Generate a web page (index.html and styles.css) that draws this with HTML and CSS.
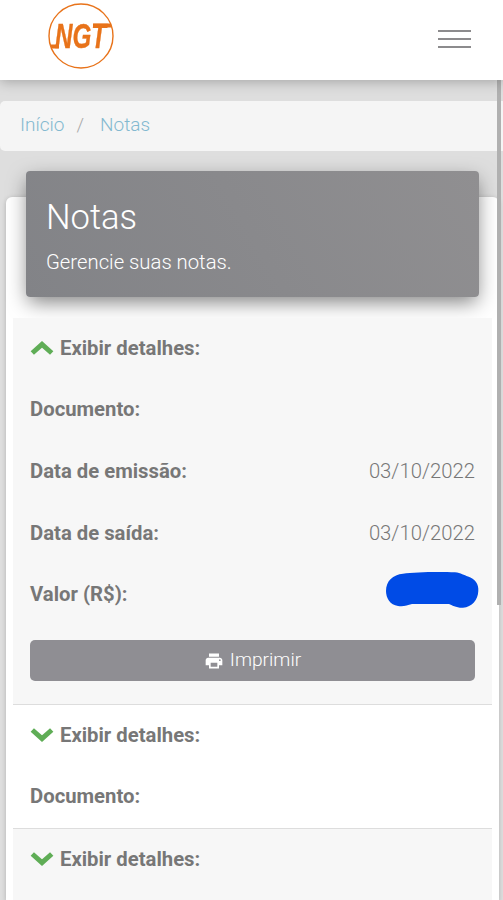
FILE: index.html
```html
<!DOCTYPE html>
<html lang="pt-BR">
<head>
    <meta charset="UTF-8">
    <meta name="viewport" content="width=device-width, initial-scale=1.0">
    <title>Notas</title>
    <link rel="stylesheet" href="styles.css">
</head>
<body>
    <nav class="navbar">
        <svg class="logo" viewBox="0 0 66 66" role="img" aria-label="NGT">
            <circle cx="33" cy="33" r="32"/>
            <path d="M3 43.5H11M45 22.5H63"/>
            <text x="7" y="45.3" textLength="51" lengthAdjust="spacingAndGlyphs">NGT</text>
        </svg>
        <button class="menu-toggle" aria-label="Menu">
            <span></span>
            <span></span>
            <span></span>
        </button>
    </nav>
    <ol class="breadcrumb">
        <li><a href="#">Início</a></li>
        <li><a href="#">Notas</a></li>
    </ol>
    <main class="card">
        <header class="card-header">
            <h4>Notas</h4>
            <p>Gerencie suas notas.</p>
        </header>
        <div class="notes">
            <section class="note">
                <div class="row toggle">
                    <svg class="chevron" viewBox="0 0 24 16"><path d="M2.3 13L12 4.4L21.7 13"/></svg>
                    <b>Exibir detalhes:</b>
                </div>
                <div class="row"><b>Documento:</b></div>
                <div class="row"><b>Data de emissão:</b><span>03/10/2022</span></div>
                <div class="row"><b>Data de saída:</b><span>03/10/2022</span></div>
                <div class="row">
                    <b>Valor (R$):</b>
                    <svg class="mask" viewBox="0 0 94 38"><path d="M18 2.8C30 .6 57 .8 70 1.2C76 2 79 4 83 5.4C90 7.5 94 13 93.3 20C93 29 87 36 78 36.8C71 37 67 34 64 33H27C22 34 19 36 13 35C5 34 1 27 1 20C1 10 8 3.7 18 2.8Z"/></svg>
                </div>
                <div class="actions">
                    <button class="btn">
                        <svg viewBox="0 0 24 24"><path d="M19 8H5c-1.66 0-3 1.34-3 3v6h4v4h12v-4h4v-6c0-1.66-1.34-3-3-3zm-3 11H8v-5h8v5zm3-7a1 1 0 1 1 0-2 1 1 0 0 1 0 2zM18 3H6v4h12V3z"/></svg>
                        Imprimir
                    </button>
                </div>
            </section>
            <section class="note">
                <div class="row toggle">
                    <svg class="chevron" viewBox="0 0 24 16"><path d="M2.3 3L12 11.6L21.7 3"/></svg>
                    <b>Exibir detalhes:</b>
                </div>
                <div class="row"><b>Documento:</b></div>
            </section>
            <section class="note">
                <div class="row toggle">
                    <svg class="chevron" viewBox="0 0 24 16"><path d="M2.3 3L12 11.6L21.7 3"/></svg>
                    <b>Exibir detalhes:</b>
                </div>
            </section>
        </div>
    </main>
    <div class="scroll-thumb"></div>
</body>
</html>
```

FILE: styles.css
```css
* {
    box-sizing: border-box;
}
body {
    margin: 0;
    height: 100vh;
    display: flex;
    flex-direction: column;
    overflow: hidden;
    background-color: #dedede;
    color: #777;
    font-family: Roboto, "Liberation Sans", sans-serif;
    font-size: 20.3px;
    font-weight: 300;
}
.navbar {
    position: relative;
    z-index: 3;
    display: flex;
    flex-shrink: 0;
    justify-content: space-between;
    height: 80px;
    padding: 3px 32px 0 48px;
    background-color: #fff;
    box-shadow: 0 2px 12px rgba(0, 0, 0, 0.26);
}
.logo {
    width: 66px;
    height: 66px;
    overflow: visible;
    fill: none;
    stroke: #e8731a;
}
.logo circle {
    stroke-width: 1.4;
}
.logo path {
    stroke-width: 4;
}
.logo text {
    fill: #e8731a;
    stroke-width: 0.4;
    font: italic 700 35px "Liberation Sans", sans-serif;
}
.menu-toggle {
    display: flex;
    flex-direction: column;
    gap: 6px;
    width: 33px;
    margin-top: 27px;
    padding: 0;
    border: none;
    background: none;
}
.menu-toggle span {
    height: 2px;
    width: 33px;
    background-color: #8c8b8d;
}
.breadcrumb {
    display: flex;
    flex-shrink: 0;
    align-items: center;
    height: 50px;
    margin: 21px 0 0;
    padding: 0 20px 4px;
    background-color: #f5f5f5;
    border-radius: 5px 0 0 5px;
    font-size: 19px;
    list-style: none;
}
.breadcrumb a {
    color: #83b9d0;
    text-decoration: none;
}
.breadcrumb li + li::before {
    content: "/";
    padding: 0 16px 0 12px;
    color: #aaa;
}
.card {
    flex: 1;
    margin: 46px 4px 0 6px;
    padding: 0 7px;
    background-color: #fff;
    border-radius: 6px 6px 0 0;
    box-shadow: 0 1px 5px rgba(0, 0, 0, 0.2);
}
.card-header {
    position: relative;
    top: -26px;
    height: 126px;
    margin: 0 13px -5px;
    padding: 26px 20px;
    background: linear-gradient(60deg, #828387, #908f91);
    border-radius: 4px;
    box-shadow: 0 7px 20px -2px rgba(0, 0, 0, 0.5);
    color: #fff;
}
.card-header h4 {
    margin: 0;
    font-size: 34.6px;
    font-weight: 300;
    line-height: 40px;
}
.card-header p {
    margin: 13px 0 0;
    line-height: 24px;
}
.note {
    position: relative;
    padding: 0 17px;
    background-color: #fff;
}
.note:nth-child(odd) {
    background-color: #f7f7f7;
}
.note + .note {
    border-top: 1px solid #ddd;
}
.note:last-child {
    padding-bottom: 10px;
}
.row {
    display: flex;
    align-items: center;
    justify-content: space-between;
    height: 61.6px;
    padding-bottom: 2px;
}
.row b {
    font-weight: 700;
}
.row.toggle {
    justify-content: flex-start;
    gap: 6px;
}
.chevron {
    width: 24px;
    height: 16px;
    fill: none;
    stroke: #5fad56;
    stroke-width: 5;
}
.mask {
    width: 94px;
    height: 38px;
    margin: -8px -4px 0 0;
    fill: #004be6;
}
.actions {
    padding: 14.5px 0 22.5px;
}
.btn {
    display: flex;
    align-items: center;
    justify-content: center;
    gap: 6px;
    width: 100%;
    height: 41px;
    padding: 0 0 2px;
    border: none;
    border-radius: 5px;
    background-color: #8f8e93;
    color: #fff;
    font: inherit;
    font-size: 19.2px;
}
.btn svg {
    width: 20px;
    height: 20px;
    margin-top: 2px;
    fill: #fff;
}
.scroll-thumb {
    position: fixed;
    z-index: 2;
    top: 80px;
    right: 2px;
    width: 4px;
    height: 525px;
    background-color: #b0b0b0;
}
```
